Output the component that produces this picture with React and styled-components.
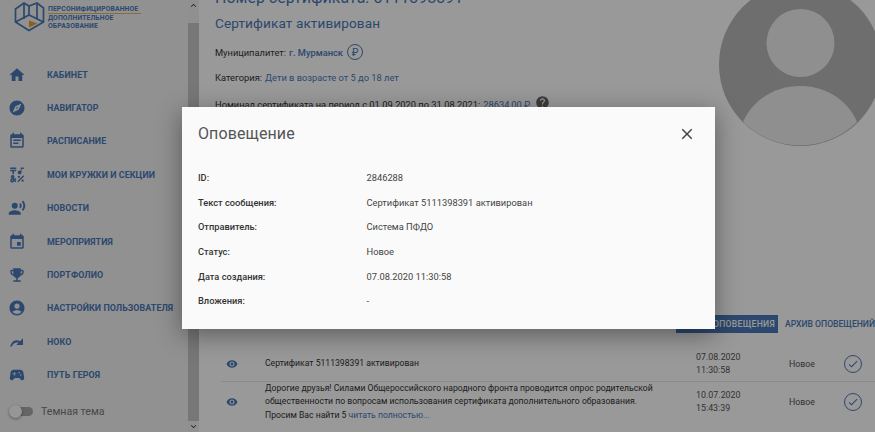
import React from "react";
import styled, { createGlobalStyle } from "styled-components";
import {
  MdHome, MdExplore, MdEventNote, MdEmojiSymbols, MdRecordVoiceOver, MdEvent,
  MdEmojiEvents, MdAccountCircle, MdSportsEsports, MdHelp, MdVisibility, MdClose,
  MdKeyboardArrowUp, MdKeyboardArrowDown, MdCheck,
} from "react-icons/md";

const BLUE = "#4a78b8";

const Global = createGlobalStyle`
  html, body { margin: 0; padding: 0; height: 100%; overflow: hidden; }
  body { font-family: Roboto, "Liberation Sans", sans-serif; background: #f7f7f7; color: #333; }
  #root { height: 100%; }
`;

const Page = styled.div`
  position: relative;
  width: 875px;
  height: 432px;
  display: flex;
  overflow: hidden;
`;

const Sidebar = styled.aside`
  width: 188px;
  flex: none;
  display: flex;
  flex-direction: column;
  background: #f2f2f2;
`;

const Brand = styled.div`
  height: 58px;
  flex: none;
  display: flex;
  align-items: flex-start;
  gap: 3px;
  padding: 1px 0 0 14px;
  box-sizing: border-box;
`;

const BrandText = styled.div`
  font-size: 6.8px;
  line-height: 8px;
  font-weight: 700;
  color: ${BLUE};
  letter-spacing: 0.12px;
  padding-top: 4px;
  span { display: block; }
  span:first-child { border-bottom: 1px solid #e8b45c; width: 93px; }
`;

const NavList = styled.nav`
  display: flex;
  flex-direction: column;
`;

const NavItem = styled.div`
  height: 33.4px;
  display: flex;
  align-items: center;
  padding-left: 8px;
  color: ${BLUE};
  svg { width: 18px; height: 18px; flex: none; margin-right: 21px; }
`;

const NavLabel = styled.span`
  font-size: 8.9px;
  font-weight: 700;
  letter-spacing: 0.08px;
  white-space: nowrap;
`;

const ThemeRow = styled.div`
  display: flex;
  align-items: center;
  margin-top: 13px;
  padding-left: 10px;
  gap: 8px;
  font-size: 10.6px;
  color: #777;
`;

const Track = styled.div`
  position: relative;
  width: 23px;
  height: 9px;
  border-radius: 5px;
  background: #a9a9a9;
`;

const Knob = styled.div`
  position: absolute;
  left: -1px;
  top: -2px;
  width: 13px;
  height: 13px;
  border-radius: 50%;
  background: #fafafa;
  box-shadow: 0 1px 3px rgba(0, 0, 0, 0.4);
`;

const Scrollbar = styled.div`
  width: 11px;
  flex: none;
  display: flex;
  flex-direction: column;
  align-items: center;
  background: #f0f0f0;
  color: #444;
  svg { width: 11px; height: 11px; flex: none; }
`;

const ScrollSpace = styled.div`
  flex: none;
  height: ${(p) => p.$h}px;
`;

const ScrollThumb = styled.div`
  flex: 1;
  width: 100%;
  background: #c6c6c6;
`;

const Main = styled.main`
  flex: 1;
  min-width: 0;
  position: relative;
  display: flex;
  flex-direction: column;
  padding-left: 16px;
  background: #fff;
  overflow: hidden;
`;

const TopRow = styled.div`
  height: 327px;
  flex: none;
  margin-top: -12px;
`;

const Number = styled.h1`
  margin: 0;
  font-size: 16px;
  line-height: 19px;
  font-weight: 400;
  color: ${BLUE};
`;

const Status = styled.h2`
  margin: 6px 0 0;
  font-size: 13.6px;
  line-height: 20px;
  font-weight: 400;
  color: ${BLUE};
  letter-spacing: 0.1px;
`;

const InfoLine = styled.p`
  margin: 0;
  display: flex;
  align-items: center;
  gap: 3px;
  height: 18px;
  margin-top: ${(p) => p.$mt}px;
  font-size: 9.3px;
  color: #333;
  white-space: nowrap;
`;

const Accent = styled.span`
  color: ${BLUE};
  font-weight: ${(p) => (p.$bold ? 500 : 400)};
`;

const RubleBadge = styled.span`
  width: 16px;
  height: 16px;
  margin-left: 1px;
  box-sizing: border-box;
  border: 1px solid ${BLUE};
  border-radius: 50%;
  display: flex;
  align-items: center;
  justify-content: center;
  color: ${BLUE};
  font-size: 10px;
`;

const HelpIcon = styled(MdHelp)`
  width: 15px;
  height: 15px;
  color: #666;
  margin-left: 2px;
  margin-top: -3px;
`;

const Avatar = styled.svg`
  position: absolute;
  left: 520px;
  top: -17px;
  width: 163px;
  height: 163px;
`;

const TabsBar = styled.div`
  display: flex;
  justify-content: flex-end;
  align-items: center;
  height: 18px;
  flex: none;
  white-space: nowrap;
`;

const Tab = styled.div`
  height: 18px;
  display: flex;
  align-items: center;
  padding: 0 ${(p) => (p.$active ? 3 : 0)}px 0 ${(p) => p.$pl || 0}px;
  font-size: 8.6px;
  font-weight: 500;
  letter-spacing: ${(p) => (p.$active ? 0.3 : 0)}px;
  color: ${(p) => (p.$active ? "#fff" : BLUE)};
  background: ${(p) => (p.$active ? BLUE : "transparent")};
  margin-right: ${(p) => p.$mr || 0}px;
`;

const Table = styled.div`
  display: flex;
  flex-direction: column;
  margin-top: 13px;
  margin-left: 6px;
`;

const Row = styled.div`
  display: grid;
  grid-template-columns: 44px 431px 93px 55px 20px;
  align-items: center;
  height: ${(p) => p.$h}px;
  border-bottom: ${(p) => (p.$line ? "1px solid #e6e6e6" : "none")};
  font-size: 8.8px;
  color: #555;
`;

const EyeCell = styled.div`
  display: flex;
  padding-left: 5px;
  color: ${BLUE};
  svg { width: 12px; height: 12px; }
`;

const Message = styled.div`
  font-size: 8.65px;
  line-height: 13.4px;
  color: #333;
  white-space: nowrap;
`;

const DateCell = styled.div`
  font-size: 8.9px;
  line-height: 13px;
  color: #555;
`;

const CheckCircle = styled.div`
  width: 18px;
  height: 18px;
  box-sizing: border-box;
  border: 1px solid ${BLUE};
  border-radius: 50%;
  display: flex;
  align-items: center;
  justify-content: center;
  color: ${BLUE};
  svg { width: 12px; height: 12px; }
`;

const ReadMore = styled.span`
  color: ${BLUE};
`;

const Overlay = styled.div`
  position: absolute;
  inset: 0;
  background: rgba(0, 0, 0, 0.4);
`;

const Modal = styled.section`
  position: absolute;
  left: 182px;
  top: 107px;
  width: 533px;
  height: 222px;
  box-sizing: border-box;
  padding: 0 16px;
  background: #fafafa;
  box-shadow: 0 6px 24px rgba(0, 0, 0, 0.4);
`;

const ModalHeader = styled.header`
  height: 58px;
  padding-bottom: 5px;
  box-sizing: border-box;
  display: flex;
  align-items: center;
  justify-content: space-between;
`;

const ModalTitle = styled.h3`
  margin: 0;
  font-size: 16px;
  font-weight: 400;
  color: #555;
  letter-spacing: 0.1px;
`;

const CloseIcon = styled(MdClose)`
  width: 18px;
  height: 18px;
  margin-right: 3px;
  color: #444;
`;

const Fields = styled.dl`
  margin: 0;
  display: grid;
  grid-template-columns: 168.500px 1fr;
  grid-auto-rows: 24.7px;
  align-items: center;
`;

const Term = styled.dt`
  font-size: 9.25px;
  font-weight: 500;
  color: #333;
`;

const Value = styled.dd`
  margin: 0;
  font-size: 9.3px;
  color: #444;
`;

const NokoIcon = () => (
  <svg viewBox="0 0 24 24" fill="currentColor">
    <path d="M3 18C5 10 11 8 16 11l4-4v9h-9l3-3c-4-1-7 1-9 5z" />
  </svg>
);

const nav = [
  [MdHome, "КАБИНЕТ"],
  [MdExplore, "НАВИГАТОР"],
  [MdEventNote, "РАСПИСАНИЕ"],
  [MdEmojiSymbols, "МОИ КРУЖКИ И СЕКЦИИ"],
  [MdRecordVoiceOver, "НОВОСТИ"],
  [MdEvent, "МЕРОПРИЯТИЯ"],
  [MdEmojiEvents, "ПОРТФОЛИО"],
  [MdAccountCircle, "НАСТРОЙКИ ПОЛЬЗОВАТЕЛЯ"],
  [NokoIcon, "НОКО"],
  [MdSportsEsports, "ПУТЬ ГЕРОЯ"],
];

const fields = [
  ["ID:", "2846288"],
  ["Текст сообщения:", "Сертификат 5111398391 активирован"],
  ["Отправитель:", "Система ПФДО"],
  ["Статус:", "Новое"],
  ["Дата создания:", "07.08.2020 11:30:58"],
  ["Вложения:", "-"],
];

const Logo = () => (
  <svg width="31" height="31" viewBox="0 0 31 31" fill="none" stroke={BLUE} strokeWidth="1.7" style={{ flex: "none" }}>
    <path d="M10 2 15 5 23 2 29.500 7V21L15 29.500 1.500 21V8z" />
    <path d="M1.500 21 15 14 29.500 21M10 2V18M23 2V18M15 5V14" />
    <path d="M15 19.500 23.500 22.500 15 26.500z" fill="#e8a02c" stroke="none" />
  </svg>
);

export default function App() {
  return (
    <Page>
      <Global />
      <Sidebar>
        <Brand>
          <Logo />
          <BrandText>
            <span>ПЕРСОНИФИЦИРОВАННОЕ</span>
            <span>ДОПОЛНИТЕЛЬНОЕ</span>
            <span>ОБРАЗОВАНИЕ</span>
          </BrandText>
        </Brand>
        <NavList>
          {nav.map(([Icon, label]) => (
            <NavItem key={label}>
              <Icon />
              <NavLabel>{label}</NavLabel>
            </NavItem>
          ))}
        </NavList>
        <ThemeRow>
          <Track><Knob /></Track>
          Темная тема
        </ThemeRow>
      </Sidebar>
      <Scrollbar>
        <MdKeyboardArrowUp />
        <ScrollSpace $h={12} />
        <ScrollThumb />
        <MdKeyboardArrowDown />
      </Scrollbar>
      <Main>
        <TopRow>
          <Number>Номер сертификата: 5111398391</Number>
          <Status>Сертификат активирован</Status>
          <InfoLine $mt={10}>
            Муниципалитет: <Accent $bold>г. Мурманск</Accent>
            <RubleBadge>₽</RubleBadge>
          </InfoLine>
          <InfoLine $mt={7}>
            Категория: <Accent>Дети в возрасте от 5 до 18 лет</Accent>
          </InfoLine>
          <InfoLine $mt={9}>
            Номинал сертификата на период с 01.09.2020 по 31.08.2021: <Accent>28634,00 ₽</Accent>
            <HelpIcon />
          </InfoLine>
          <Avatar viewBox="0 0 163 163">
            <circle cx="81.500" cy="81.500" r="81.500" fill="#b7b8ba" />
            <circle cx="81.500" cy="60" r="34" fill="#efefef" />
            <path d="M24 139C36 113 60 103 81 103s46 10 57 36A81.500 81.500 0 0 1 24 139z" fill="#efefef" />
          </Avatar>
        </TopRow>
        <TabsBar>
          <Tab $active $pl={37} $mr={7}>ОПОВЕЩЕНИЯ</Tab>
          <Tab>АРХИВ ОПОВЕЩЕНИЙ</Tab>
        </TabsBar>
        <Table>
          <Row $h={35} $line>
            <EyeCell><MdVisibility /></EyeCell>
            <Message>Сертификат 5111398391 активирован</Message>
            <DateCell>07.08.2020<br />11:30:58</DateCell>
            <div>Новое</div>
            <CheckCircle><MdCheck /></CheckCircle>
          </Row>
          <Row $h={40}>
            <EyeCell><MdVisibility /></EyeCell>
            <Message>
              Дорогие друзья! Силами Общероссийского народного фронта проводится опрос родительской<br />
              общественности по вопросам использования сертификата дополнительного образования.<br />
              Просим Вас найти 5 <ReadMore>читать полностью...</ReadMore>
            </Message>
            <DateCell>10.07.2020<br />15:43:39</DateCell>
            <div>Новое</div>
            <CheckCircle><MdCheck /></CheckCircle>
          </Row>
        </Table>
      </Main>
      <Overlay />
      <Modal>
        <ModalHeader>
          <ModalTitle>Оповещение</ModalTitle>
          <CloseIcon />
        </ModalHeader>
        <Fields>
          {fields.map(([t, v]) => (
            <React.Fragment key={t}>
              <Term>{t}</Term>
              <Value>{v}</Value>
            </React.Fragment>
          ))}
        </Fields>
      </Modal>
    </Page>
  );
}
